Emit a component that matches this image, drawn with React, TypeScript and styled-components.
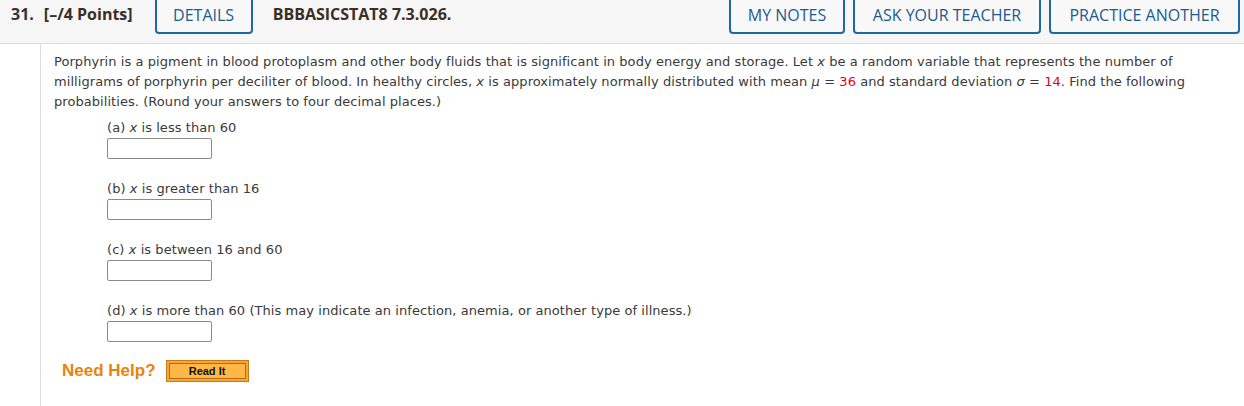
import React from "react";
import styled, { createGlobalStyle } from "styled-components";

const Global = createGlobalStyle`
  html, body { margin: 0; padding: 0; background: #fff; }
  body { width: 1244px; height: 406px; overflow: hidden; }
`;

const Page = styled.div`
  width: 1244px;
  height: 406px;
  display: flex;
  flex-direction: column;
`;

const Header = styled.div`
  height: 43px;
  background: #f6f6f6;
  border-bottom: 1px solid #dcdcdc;
  display: flex;
  align-items: flex-start;
  overflow: hidden;
  font-family: "Open Sans", sans-serif;
  font-size: 16px;
  font-weight: 700;
  color: #333;
`;

const Label = styled.span<{ $ml: number; $dark?: boolean }>`
  margin-left: ${(p) => p.$ml}px;
  line-height: 28px;
  white-space: nowrap;
  color: ${(p) => (p.$dark ? "#333" : "#3a2e26")};
`;

const Spacer = styled.div<{ $fixed?: number }>`
  flex: ${(p) => (p.$fixed ? `0 0 ${p.$fixed}px` : "1")};
`;

const HButton = styled.button<{ $w: number; $ml: number }>`
  width: ${(p) => p.$w}px;
  margin-left: ${(p) => p.$ml}px;
  height: 42px;
  margin-top: -8px;
  padding: 4px 0 0;
  border: 2px solid #1e6aa0;
  border-radius: 4px;
  background: #f8f8f8;
  font-family: "Open Sans", sans-serif;
  font-size: 16px;
  font-weight: 400;
  color: #1d5b8f;
  text-transform: uppercase;
  white-space: nowrap;
  cursor: pointer;
`;

const Body = styled.div`
  flex: 1;
  margin-left: 40px;
  border-left: 1px solid #dcdcdc;
  padding: 8px 20px 0 13px;
  font-family: "DejaVu Sans", Verdana, sans-serif;
  font-size: 13px;
  letter-spacing: 0.06px;
  color: #3a3a3a;
`;

const Para = styled.p`
  margin: 0;
  line-height: 20px;
  white-space: nowrap;
`;

const Red = styled.span`
  color: #e3001b;
`;

const Var = styled.i`
  font-style: italic;
`;

const Parts = styled.div`
  margin-left: 53px;
  margin-top: 7px;
  display: flex;
  flex-direction: column;
  gap: 21px;
`;

const Part = styled.div`
  display: flex;
  flex-direction: column;
  gap: 1px;
`;

const PartLabel = styled.div`
  line-height: 18px;
`;

const Answer = styled.input`
  width: 105px;
  height: 21px;
  box-sizing: border-box;
  border: 1px solid #8a8a8a;
  border-radius: 2px;
  background: #fff;
  margin: 0;
  padding: 0;
`;

const Help = styled.div`
  display: flex;
  align-items: center;
  gap: 10px;
  margin-top: 18px;
  margin-left: 8px;
`;

const HelpText = styled.span`
  font-family: "Liberation Sans", Arial, sans-serif;
  font-size: 17px;
  font-weight: 700;
  letter-spacing: 0;
  color: #e8830c;
`;

const ReadIt = styled.button`
  width: 83px;
  height: 22px;
  box-sizing: border-box;
  border: 1px solid #c9781b;
  background: #f9a533;
  padding: 2px;
  cursor: pointer;
  display: flex;
`;

const ReadItInner = styled.span`
  flex: 1;
  border: 1px solid #b46b12;
  background: #ffb847;
  font-family: "Liberation Sans", Arial, sans-serif;
  font-size: 11px;
  font-weight: 700;
  color: #111;
  display: flex;
  align-items: center;
  justify-content: center;
  line-height: 13px;
`;

const parts = [
  "is less than 60",
  "is greater than 16",
  "is between 16 and 60",
  "is more than 60 (This may indicate an infection, anemia, or another type of illness.)",
];

export default function App() {
  return (
    <Page>
      <Global />
      <Header>
        <Label $ml={11} $dark>31.</Label>
        <Label $ml={10}>[–/4 Points]</Label>
        <HButton $w={98} $ml={22}>Details</HButton>
        <Label $ml={20}>BBBASICSTAT8 7.3.026.</Label>
        <Spacer />
        <HButton $w={116} $ml={0}>My Notes</HButton>
        <HButton $w={188} $ml={8}>Ask Your Teacher</HButton>
        <HButton $w={191} $ml={8}>Practice Another</HButton>
        <Spacer $fixed={4} />
      </Header>
      <Body>
        <Para>
          Porphyrin is a pigment in blood protoplasm and other body fluids that is significant in body energy and
          storage. Let <Var>x</Var> be a random variable that represents the number of
          <br />
          milligrams of porphyrin per deciliter of blood. In healthy circles, <Var>x</Var> is approximately normally
          distributed with mean <Var>μ</Var> = <Red>36</Red> and standard deviation <Var>σ</Var> = <Red>14</Red>.
          Find the following
          <br />
          probabilities. (Round your answers to four decimal places.)
        </Para>
        <Parts>
          {parts.map((t, i) => (
            <Part key={i}>
              <PartLabel>
                ({"abcd"[i]}) <Var>x</Var> {t}
              </PartLabel>
              <Answer type="text" />
            </Part>
          ))}
        </Parts>
        <Help>
          <HelpText>Need Help?</HelpText>
          <ReadIt>
            <ReadItInner>Read It</ReadItInner>
          </ReadIt>
        </Help>
      </Body>
    </Page>
  );
}
